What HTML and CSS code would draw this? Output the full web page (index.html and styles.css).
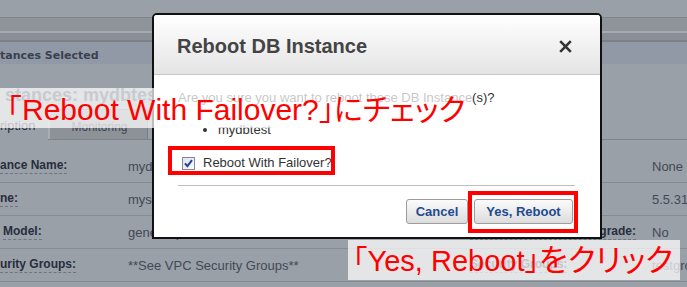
FILE: index.html
```html
<!DOCTYPE html>
<html lang="ja">
<head>
<meta charset="utf-8">
<title>Reboot DB Instance</title>
<link rel="stylesheet" href="styles.css">
</head>
<body>
<div class="page">
  <div class="topbar"></div>
  <div class="toolbar"></div>
  <div class="toolbar2"></div>
  <div class="selbar">tances Selected</div>
  <h1 class="heading">stances: mydbtest</h1>
  <div class="tabs">
    <div class="tab tab-active">ription</div>
    <div class="tab tab-other">Monitoring</div>
  </div>
  <div class="rows">
    <div class="row">
      <span class="lbl">ance Name:</span><span class="val">mydbtest</span>
      <span class="lbl lbl-r">Multi-AZ Deployment:</span><span class="val">None</span>
    </div>
    <div class="row">
      <span class="lbl">ne:</span><span class="val">mysql</span>
      <span class="lbl lbl-r">Engine Version:</span><span class="val">5.5.31</span>
    </div>
    <div class="row">
      <span class="lbl lbl-indent">Model:</span><span class="val">general-public-license</span>
      <span class="lbl lbl-r">Auto Minor Version Upgrade:</span><span class="val">No</span>
    </div>
    <div class="row">
      <span class="lbl">urity Groups:</span><span class="val">**See VPC Security Groups**</span>
      <span class="lbl lbl-r">Security Groups:</span><span class="val">testgroup</span>
    </div>
  </div>
</div>

<div class="dialog" role="dialog" aria-label="Reboot DB Instance">
  <div class="dlg-head">
    <h2 class="dlg-title">Reboot DB Instance</h2>
    <button class="dlg-close" aria-label="Close">
      <svg width="13" height="13" viewBox="0 0 13 13"><path d="M1.2 1.2 L11.8 11.8 M11.8 1.2 L1.2 11.8" stroke="#333" stroke-width="2.6" fill="none"/></svg>
    </button>
  </div>
  <div class="dlg-body">
    <p class="dlg-q">Are you sure you want to reboot these DB Instance(s)?</p>
    <ul class="dlg-list"><li>mydbtest</li></ul>
    <div class="dlg-option">
      <label class="dlg-check">
        <span class="cbox"><svg width="13" height="13" viewBox="0 0 13 13"><defs><linearGradient id="cg" x1="0" y1="0" x2="1" y2="1"><stop offset="0" stop-color="#dde2ea"/><stop offset="1" stop-color="#fbfcfd"/></linearGradient></defs><rect x="0.5" y="0.5" width="12" height="12" fill="url(#cg)" stroke="#7f8ba0"/><path d="M3 6.3 L5.4 9.2 L10 3.2" fill="none" stroke="#27409a" stroke-width="2"/></svg></span>
        Reboot With Failover?
      </label>
    </div>
    <hr class="dlg-sep">
    <div class="dlg-btns">
      <button class="btn btn-cancel">Cancel</button>
      <button class="btn btn-primary">Yes, Reboot</button>
    </div>
  </div>
</div>

<div class="note note1"><span class="br">「</span>Reboot With Failover?<span class="br">」</span><span class="kana">にチェック</span></div>
<div class="note note2"><span class="br">「</span>Yes, Reboot<span class="br">」</span><span class="kana">をクリック</span></div>
</body>
</html>
```
FILE: styles.css
```css
* { box-sizing: border-box; }
html, body { margin: 0; padding: 0; }
body {
  width: 687px;
  height: 287px;
  overflow: hidden;
  position: relative;
  background: #9aa0a8;
  font-family: "Liberation Sans", Arial, sans-serif;
}

/* dimmed console page */
.page { width: 687px; }
.topbar { height: 18px; border-bottom: 1px solid #80858c; }
.toolbar { height: 15px; background: #8f949b; border-bottom: 2px solid #a5aab1; }
.toolbar2 { height: 9px; background: #8a8f96; border-bottom: 2px solid #7c8188; }
.selbar {
  height: 22px;
  padding-top: 6px;
  line-height: 16px;
  background: #9199a7;
  font-family: "DejaVu Sans", sans-serif;
  font-weight: bold;
  font-size: 11px;
  color: #3a4150;
  white-space: nowrap;
}
.heading {
  margin: 0;
  height: 45px;
  padding: 20px 0 0 5px;
  line-height: 22px;
  font-size: 18px;
  font-weight: bold;
  color: #35435a;
  white-space: nowrap;
}
.tabs {
  height: 31px;
  display: flex;
  align-items: flex-end;
  border-bottom: 1px solid #7f848b;
}
.tab {
  height: 30px;
  padding-top: 10px;
  line-height: 14px;
  white-space: nowrap;
}
.tab-active {
  width: 48px;
  font-size: 13px;
  color: #262d38;
  height: 31px;
  margin-bottom: -1px;
  background: #9aa0a8;
}
.tab-other {
  width: 100px;
  font-size: 12px;
  color: #3c4450;
  text-align: center;
  background: #8d9299;
  border: 1px solid #7a7f86;
  border-left: 2px solid #a9aeb5;
  border-bottom: none;
  padding-left: 2px;
}
.rows { padding-top: 10px; }
.row {
  height: 33px;
  display: grid;
  grid-template-columns: 128px 342px 182px 1fr;
  align-items: center;
  border-bottom: 1px solid #868b93;
  white-space: nowrap;
}
.lbl {
  justify-self: start;
  font-size: 12px;
  font-weight: bold;
  color: #272e3d;
  line-height: 15px;
  border-bottom: 1px dashed #6f757e;
}
.lbl-indent { margin-left: 3px; }
.val {
  font-size: 13px;
  color: #434955;
  overflow: hidden;
}

/* dialog */
.dialog {
  position: absolute;
  left: 152px;
  top: 13px;
  width: 450px;
  height: 226px;
  background: #fff;
  border: 2px solid #111;
  border-radius: 5px 5px 0 0;
}
.dlg-head {
  height: 60px;
  padding: 3px 28px 0 23px;
  display: flex;
  align-items: center;
  justify-content: space-between;
  background: linear-gradient(#ffffff, #e4e4e4);
  border-bottom: 1px solid #c6c6c6;
  border-radius: 3px 3px 0 0;
}
.dlg-title {
  margin: 0;
  font-size: 20px;
  line-height: 24px;
  font-weight: bold;
  color: #444;
}
.dlg-close {
  width: 13px;
  height: 13px;
  padding: 0;
  border: none;
  background: none;
  display: flex;
}
.dlg-body {
  padding: 15px 25px 0 24px;
  font-size: 13px;
  line-height: 16px;
  color: #333;
}
.dlg-q { margin: 0; white-space: nowrap; }
.dlg-list { margin: 16px 0 0; padding-left: 40px; }
.dlg-option { margin-top: 17px; }
.dlg-check {
  position: relative;
  display: inline-flex;
  align-items: center;
  gap: 8px;
  margin-left: 4px;
}
.cbox { display: flex; }
.dlg-check::after {
  content: "";
  position: absolute;
  top: -9px;
  bottom: -4px;
  left: -14px;
  right: -3px;
  border: 4px solid #f00;
  pointer-events: none;
}
.dlg-sep {
  margin: 11px 0 0;
  border: none;
  border-top: 1px solid #bdbdbd;
  height: 0;
}
.dlg-btns {
  margin-top: 13px;
  padding-right: 2px;
  display: flex;
  justify-content: flex-end;
  gap: 6px;
}
.btn {
  position: relative;
  height: 25px;
  padding: 0;
  font-family: "Liberation Sans", Arial, sans-serif;
  font-size: 13px;
  font-weight: bold;
  color: #1d4b8f;
  background: linear-gradient(#fbfbfb, #dcdcdc);
  border: 1px solid #9c9c9c;
  border-radius: 3px;
}
.btn-cancel { width: 62px; }
.btn-primary { width: 99px; }
.btn-primary::after {
  content: "";
  position: absolute;
  top: -9px;
  bottom: -10px;
  left: -7px;
  right: -6px;
  border: 4px solid #f00;
  pointer-events: none;
}

/* annotations */
.note {
  position: absolute;
  height: 40px;
  background: rgba(255, 255, 255, 0.72);
  color: #f00;
  white-space: nowrap;
  font-family: "Liberation Sans", "Noto Sans CJK JP", sans-serif;
}
.note1 {
  left: 0;
  top: 88px;
  width: 472px;
  padding-left: 7px;
  font-size: 30px;
  line-height: 38px;
}
.note2 {
  left: 348px;
  top: 240px;
  width: 332px;
  padding-left: 5px;
  font-size: 29px;
  line-height: 36px;
}
.br {
  font-family: "Noto Sans CJK JP", sans-serif;
  font-feature-settings: "halt";
}
.kana {
  font-family: "Noto Sans CJK JP", sans-serif;
  font-feature-settings: "palt";
}
.note2 .kana { font-size: 31px; }
```
